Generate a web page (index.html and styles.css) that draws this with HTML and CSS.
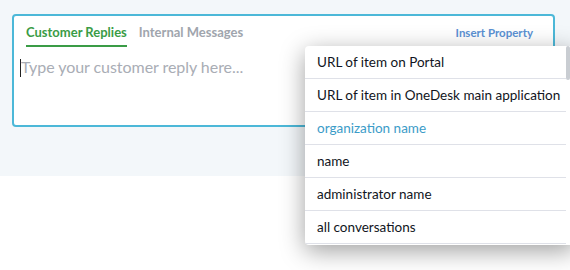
FILE: index.html
```html
<!DOCTYPE html>
<html lang="en">
<head>
    <meta charset="UTF-8">
    <title>Reply</title>
    <link rel="stylesheet" href="styles.css">
</head>
<body>
    <div class="panel">
        <div class="editor">
            <div class="editor-head">
                <div class="tabs">
                    <span class="tab active">Customer Replies</span>
                    <span class="tab">Internal Messages</span>
                </div>
                <span class="insert-link">Insert Property</span>
            </div>
            <div class="reply-input"><span class="caret"></span>Type your customer reply here...</div>
        </div>

        <div class="prop-menu">
            <ul class="prop-list">
                <li>URL of item on Portal</li>
                <li>URL of item in OneDesk main application</li>
                <li class="hover">organization name</li>
                <li>name</li>
                <li>administrator name</li>
                <li>all conversations</li>
            </ul>
            <div class="scroll-track"><div class="scroll-thumb"></div></div>
        </div>
    </div>
</body>
</html>
```

FILE: styles.css
```css
* {
    margin: 0;
    padding: 0;
    box-sizing: border-box;
}

body {
    font-family: 'Lato', 'Liberation Sans', sans-serif;
    background: #fff;
    width: 570px;
    height: 270px;
    overflow: hidden;
}

.panel {
    position: relative;
    height: 176px;
    background: #f3f7fa;
    padding: 14px 15px 0 12px;
}

.editor {
    height: 113px;
    background: #fff;
    border: 2px solid #4cb8d8;
    border-radius: 4px;
    padding: 0 12px 0 6px;
}

.editor-head {
    display: flex;
    justify-content: space-between;
    align-items: flex-start;
    padding-left: 6px;
}

.tabs {
    display: flex;
    gap: 12px;
}

.tab {
    font-size: 13px;
    font-weight: bold;
    color: #a0a5ad;
    padding: 8px 0 5px;
    border-bottom: 2px solid transparent;
    line-height: 16px;
}

.tab.active {
    color: #3a9c46;
    border-bottom-color: #3a9c46;
}

.insert-link {
    font-size: 11.5px;
    font-weight: bold;
    color: #5b91d3;
    line-height: 15px;
    padding-top: 9px;
    margin-right: 8px;
}

.reply-input {
    font-size: 16px;
    color: #a9adb5;
    margin-top: 10px;
    line-height: 20px;
    letter-spacing: -0.05px;
}

.caret {
    display: inline-block;
    width: 1px;
    height: 18px;
    background: #222;
    vertical-align: -4px;
}

.prop-menu {
    position: absolute;
    top: 46px;
    left: 305px;
    width: 270px;
    height: 199px;
    background: #fff;
    border-radius: 4px 0 0 4px;
    box-shadow: 0 6px 24px rgba(0, 0, 0, 0.38);
    display: flex;
    overflow: hidden;
}

.prop-list {
    list-style: none;
    width: 261px;
}

.prop-list li {
    height: 33px;
    line-height: 32px;
    padding-left: 12px;
    font-size: 13.5px;
    color: #111522;
    border-bottom: 1px solid #dfe1e8;
    white-space: nowrap;
}

.prop-list li.hover {
    color: #3c9cc8;
}

.scroll-track {
    width: 9px;
    background: #fff;
}

.scroll-thumb {
    width: 4px;
    height: 34px;
    background: #c9cdd2;
    border-radius: 2px;
}
```
